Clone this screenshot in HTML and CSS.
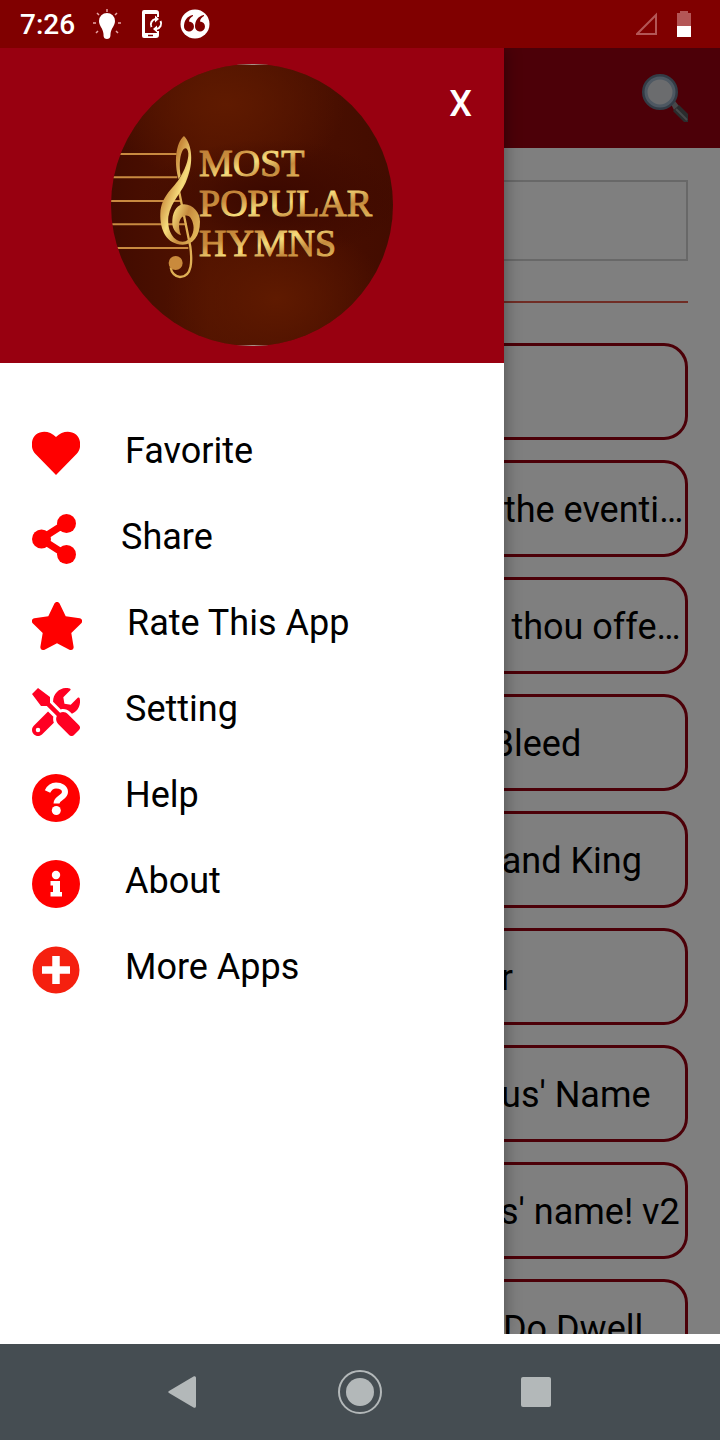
FILE: index.html
```html
<!DOCTYPE html>
<html lang="en">
<head>
    <meta charset="UTF-8">
    <meta name="viewport" content="width=device-width, initial-scale=1.0">
    <title>Most Popular Hymns</title>
    <link rel="stylesheet" href="styles.css">
</head>
<body>
    <div class="status">
        <span class="time">7:26</span>
        <svg class="bulb" width="32" height="32" viewBox="0 0 32 32">
            <path d="M16 5a8 8 0 0 0-8 8c0 5 4 7 4.500 13 0 2 0 5 3.500 5s3.500-3 3.500-5c.5-6 4.500-8 4.500-13a8 8 0 0 0-8-8z" fill="#fff"/>
            <path d="M16 1v3M6 5l2 2M26 5l-2 2M2 15h3M27 15h3M5 25l2-2M27 25l-2-2" stroke="#e6a5a5" stroke-width="1.500"/>
        </svg>
        <svg class="sync" width="25" height="30" viewBox="0 0 25 30">
            <path d="M4.500 3v24" stroke="#fff" stroke-width="3"/>
            <path d="M5 1h12a3 3 0 0 1 3 3v4h-2V5H3V3a2 2 0 0 1 2-2zM3 24h15v-2h2v4a3 3 0 0 1-3 3H5a2 2 0 0 1-2-2z" fill="#fff"/>
            <path d="M9 26.500h5" stroke="#800000" stroke-width="1.500"/>
            <path d="M12.500 18a5.500 5.500 0 0 1 4-8M21.500 12a5.500 5.500 0 0 1-4 8" fill="none" stroke="#fff" stroke-width="2"/>
            <path d="M16 6.500v7l4-3.500zM18 23.500v-7l-4 3.500z" fill="#fff"/>
        </svg>
        <svg class="quote" width="30" height="30" viewBox="0 0 30 30">
            <circle cx="15" cy="15" r="14.500" fill="#fff"/>
            <path d="M13 6C7 7 4 12 4 17a5 5 0 1 0 5-4.500c0-2.500 2-4.500 4-5.500zM24 6c-6 1-9 6-9 11a5 5 0 1 0 5-4.500c0-2.500 2-4.500 4-5.500z" fill="#800000"/>
        </svg>
        <svg class="signal" width="24" height="24" viewBox="0 0 24 24">
            <path d="M1 22L20 3v19z" fill="none" stroke="#b35656" stroke-width="2"/>
        </svg>
        <svg class="battery" width="16" height="26" viewBox="0 0 16 26">
            <path d="M4 0h8v2h3v13H1V2h3z" fill="#b35656"/>
            <path d="M1 15h14v11H1z" fill="#fff"/>
        </svg>
    </div>

    <div class="app">
        <div class="page">
            <div class="bar">
                <svg width="48" height="52" viewBox="0 0 48 52">
                    <path d="M31 32l4-3 4 5-5 4z" fill="#8d8f92"/>
                    <path d="M33 39l6-6 9 9v8h-4z" fill="#55595a"/>
                    <path d="M36 37l11 11" stroke="#8b9193" stroke-width="2"/>
                    <circle cx="20" cy="20" r="16" fill="#d6d8dc" stroke="#66788c" stroke-width="4"/>
                    <circle cx="20" cy="20" r="14" fill="none" stroke="#9cb0c4" stroke-width="3"/>
                </svg>
            </div>
            <div class="content">
                <input class="search" type="text" aria-label="Search">
                <hr>
                <ul class="songs">
                    <li>A Mighty Fortress</li>
                    <li>Abide with me: fast falls the eventide</li>
                    <li>Ah, holy Jesus, how hast thou offended</li>
                    <li>Alas! and did My Savior Bleed</li>
                    <li>All Creatures of our God and King</li>
                    <li>All Glory, Laud and Honor</li>
                    <li>All Hail the Power of Jesus' Name</li>
                    <li>All hail the pow'r of Jesus' name! v2</li>
                    <li>All People That on Earth Do Dwell</li>
                </ul>
            </div>
        </div>
        <div class="shade"></div>

        <div class="drawer">
            <div class="top">
                <svg class="logo" width="282" height="282" viewBox="0 0 282 282">
                    <defs>
                        <linearGradient id="gold" x1="0" y1="0" x2="1" y2="1">
                            <stop offset="0" stop-color="#b97a35"/>
                            <stop offset=".3" stop-color="#c98b3c"/>
                            <stop offset=".5" stop-color="#f6dc7c"/>
                            <stop offset=".7" stop-color="#c58a3d"/>
                            <stop offset="1" stop-color="#edc866"/>
                        </linearGradient>
                        <linearGradient id="wood" x1="0" y1="0" x2="1" y2="0">
                            <stop offset="0" stop-color="#420b00"/>
                            <stop offset=".35" stop-color="#511300"/>
                            <stop offset=".6" stop-color="#4b1000"/>
                            <stop offset="1" stop-color="#430c00"/>
                        </linearGradient>
                        <radialGradient id="glow">
                            <stop offset="0" stop-color="#5f1a00"/>
                            <stop offset="1" stop-color="#5f1a00" stop-opacity="0"/>
                        </radialGradient>
                        <radialGradient id="dark">
                            <stop offset="0" stop-color="#3a0800"/>
                            <stop offset="1" stop-color="#3a0800" stop-opacity="0"/>
                        </radialGradient>
                        <clipPath id="round"><circle cx="141" cy="141" r="141"/></clipPath>
                    </defs>
                    <g clip-path="url(#round)">
                        <rect width="282" height="282" fill="url(#wood)"/>
                        <ellipse cx="115" cy="40" rx="120" ry="80" fill="url(#glow)"/>
                        <ellipse cx="165" cy="235" rx="110" ry="80" fill="url(#glow)"/>
                        <ellipse cx="160" cy="135" rx="130" ry="60" fill="url(#dark)"/>
                        <path d="M121 0h40v1h-40zM121 281h40v1h-40z" fill="#a89088"/>
                        <!-- staff and clef -->
                        <g transform="translate(-11 -14) scale(.3333)">
                            <path d="M30 312h200M30 382h202M30 453h212M30 523h230M30 594h235" stroke="#c98a40" stroke-width="6"/>
                            <path d="M236 418L271 590C276 630 278 680 240 681C226 681 214 668 212 652" fill="none" stroke="#e0b055" stroke-width="7"/>
                            <circle cx="227" cy="639" r="21" fill="#c98a3c"/>
                            <path d="M236 388C222 340 226 280 252 258C278 285 280 340 262 385C250 425 214 450 205 500C201 545 222 574 248 575C274 574 284 545 280 525C276 503 266 494 255 497C237 500 232 525 243 556C226 550 215 535 217 510C219 480 235 463 252 463C280 464 300 488 300 515C300 560 278 584 248 584C200 584 179 540 181 490C184 440 215 420 237 388C255 360 266 330 265 310C263 290 252 292 246 305C238 325 238 350 242 376z" fill="url(#gold)"/>
                        </g>
                        <g fill="url(#gold)" stroke="url(#gold)">
                            <text class="word" x="88" y="112">MOST</text>
                            <text class="word" x="88" y="152">POPULAR</text>
                            <text class="word" x="88" y="192">HYMNS</text>
                        </g>
                    </g>
                </svg>
                <button class="close" type="button">X</button>
            </div>
            <nav class="menu">
                <a href="#favorite">
                    <svg width="48" height="48" viewBox="0 0 48 48"><path d="M24 45L3.500 24C-2 18-1 9 4 4.500C10 0 18 1 24 7C30 1 38 0 44 4.500C49 9 50 18 44.500 24z" fill="#f00"/></svg>
                    <span>Favorite</span>
                </a>
                <a href="#share">
                    <svg width="44" height="50" viewBox="0 0 44 50"><path d="M34 9L9 25l25 16" fill="none" stroke="#f00" stroke-width="7"/><circle cx="34.500" cy="9.500" r="9.500" fill="#f00"/><circle cx="9.500" cy="25" r="9.500" fill="#f00"/><circle cx="34.500" cy="40.500" r="9.500" fill="#f00"/></svg>
                    <span>Share</span>
                </a>
                <a href="#rate">
                    <svg width="50" height="48" viewBox="0 0 50 48"><path d="M22.300 1.700c1-2.200 4.400-2.200 5.400 0l6 12.500 14 2c2.500.4 3.200 3.200 1.600 5L39.300 31l2.300 13.700c.4 2.500-2 4-4.200 3L25 41.200l-12.400 6.500c-2.200 1-4.600-.5-4.200-3L10.700 31 .7 21.200c-1.600-1.800-.9-4.600 1.600-5l14-2z" fill="#f00"/></svg>
                    <span>Rate This App</span>
                </a>
                <a href="#setting">
                    <svg width="48" height="48" viewBox="0 0 512 512"><path d="M501 396L384 279c-23-23-58-28-85-14L192 158V96L64 0 0 64l96 128h62l107 107c-14 27-9 62 14 85l117 117c14 15 38 15 52 0l53-53c15-14 15-38 0-52zM332 225c28 0 55 11 75 31l19 19c16-7 31-16 44-29 37-37 50-89 38-137-2-9-14-12-20-5l-75 74-67-11-12-68 74-75c7-6 4-18-5-20-48-12-100 1-137 38-28 28-42 66-41 104l82 82c8-2 17-3 25-3zM228 307l-57-57L19 403c-25 25-25 65 0 90s65 25 90 0l124-123c-8-20-10-42-5-63zM64 472a24 24 0 1 1 0-48a24 24 0 0 1 0 48z" fill="#ff0022"/></svg>
                    <span>Setting</span>
                </a>
                <a href="#help">
                    <svg width="48" height="48" viewBox="0 0 48 48"><circle cx="24" cy="24" r="24" fill="#f00"/><path d="M15.500 17.500c2-4 5-6 8.500-6 5 0 9 2.500 9 6.500 0 6-8.500 5.500-8.500 11.500" fill="none" stroke="#fff" stroke-width="6"/><circle cx="24.300" cy="36.500" r="4.500" fill="#fff"/></svg>
                    <span>Help</span>
                </a>
                <a href="#about">
                    <svg width="48" height="48" viewBox="0 0 48 48"><circle cx="24" cy="24" r="24" fill="#f00"/><circle cx="24" cy="15" r="4.200" fill="#fff"/><path d="M18.500 21H28v11h2v4.500H18.500V32h2.500v-6.500h-2.500z" fill="#fff"/></svg>
                    <span>About</span>
                </a>
                <a href="#more">
                    <svg width="48" height="48" viewBox="0 0 48 48"><circle cx="24" cy="24" r="23.500" fill="#f5200f"/><path d="M24 10v28M10 24h28" stroke="#fff" stroke-width="7.500"/></svg>
                    <span>More Apps</span>
                </a>
            </nav>
        </div>
    </div>

    <div class="keys">
        <button type="button" aria-label="Back">
            <svg width="44" height="44" viewBox="0 0 44 44"><path d="M7 21L31.500 6.500c1.500-.8 2.500 0 2.500 1.500v28c0 1.500-1 2.300-2.500 1.500L7 23c-1-.6-1-1.400 0-2z" fill="#b3b8b9"/></svg>
        </button>
        <button type="button" aria-label="Home">
            <svg width="44" height="44" viewBox="0 0 44 44"><circle cx="22" cy="22" r="21" fill="none" stroke="#b3b8b9" stroke-width="2"/><circle cx="22" cy="22" r="14" fill="#b3b8b9"/></svg>
        </button>
        <button type="button" aria-label="Recent apps">
            <svg width="44" height="44" viewBox="0 0 44 44"><rect x="7" y="7" width="30" height="30" rx="2" fill="#b3b8b9"/></svg>
        </button>
    </div>
</body>
</html>
```
FILE: styles.css
```css
*{
    box-sizing: border-box;
}
body{
    margin: 0;
    height: 100vh;
    display: flex;
    flex-direction: column;
    background-color: #fff;
    color: #000;
    font-family: Roboto, sans-serif;
    font-size: 36px;
}
ul,li{
    list-style: none;
    padding: 0;
    margin: 0;
}
button{
    border: 0;
    padding: 0;
    background: none;
    font-family: inherit;
    cursor: pointer;
}
svg{
    display: block;
    flex: none;
}
/* status bar */
.status{
    flex: none;
    height: 48px;
    padding: 0 28px 0 20px;
    display: flex;
    align-items: center;
    gap: 16px;
    background-color: #800000;
}
.time{
    color: #fff;
    font-size: 28px;
    font-weight: 500;
    line-height: 48px;
    padding-top: 2px;
}
.signal{
    margin-left: auto;
}
/* page under the drawer */
.app{
    flex: 1;
    min-height: 0;
    margin-bottom: 10px;
    position: relative;
    overflow: hidden;
}
.page{
    height: 100%;
    overflow: hidden;
}
.bar{
    height: 100px;
    padding: 0 32px;
    display: flex;
    align-items: center;
    justify-content: flex-end;
    background-color: #980010;
}
.content{
    padding: 32px;
}
.search{
    display: block;
    width: 100%;
    height: 81px;
    border: 2px solid #d0d0d0;
    background-color: #fff;
    font-size: 36px;
}
hr{
    height: 2px;
    margin: 40px 0;
    border: 0;
    background-color: #e05a4a;
}
.songs{
    display: flex;
    flex-direction: column;
    gap: 20px;
}
.songs li{
    height: 97px;
    padding-left: 75px;
    line-height: 95px;
    border: 3px solid #980010;
    border-radius: 24px;
    white-space: nowrap;
    overflow: hidden;
    text-overflow: ellipsis;
}
.shade{
    position: absolute;
    inset: 0;
    background-color: rgba(0,0,0,0.5);
}
/* drawer */
.drawer{
    position: absolute;
    top: 0;
    bottom: 0;
    left: 0;
    width: 70%;
    background-color: #fff;
    box-shadow: 0 0 16px rgba(0,0,0,0.4);
}
.top{
    position: relative;
    padding: 16px 0 17px;
    display: flex;
    justify-content: center;
    background-color: #980010;
}
.word{
    font-family: "Liberation Serif", serif;
    font-size: 38px;
}
.close{
    position: absolute;
    top: 32px;
    right: 32px;
    color: #fff;
    font-size: 36px;
    font-weight: 500;
    line-height: 48px;
}
.menu{
    padding: 63px 32px;
    display: flex;
    flex-direction: column;
    gap: 34px;
}
.menu a{
    height: 52px;
    display: flex;
    align-items: flex-end;
    gap: 45px;
    color: #000;
    text-decoration: none;
}
.menu span{
    align-self: flex-start;
    line-height: 50px;
}
/* navigation keys */
.keys{
    flex: none;
    height: 96px;
    display: flex;
    align-items: center;
    justify-content: center;
    gap: 132px;
    background-color: #454d52;
}
```
